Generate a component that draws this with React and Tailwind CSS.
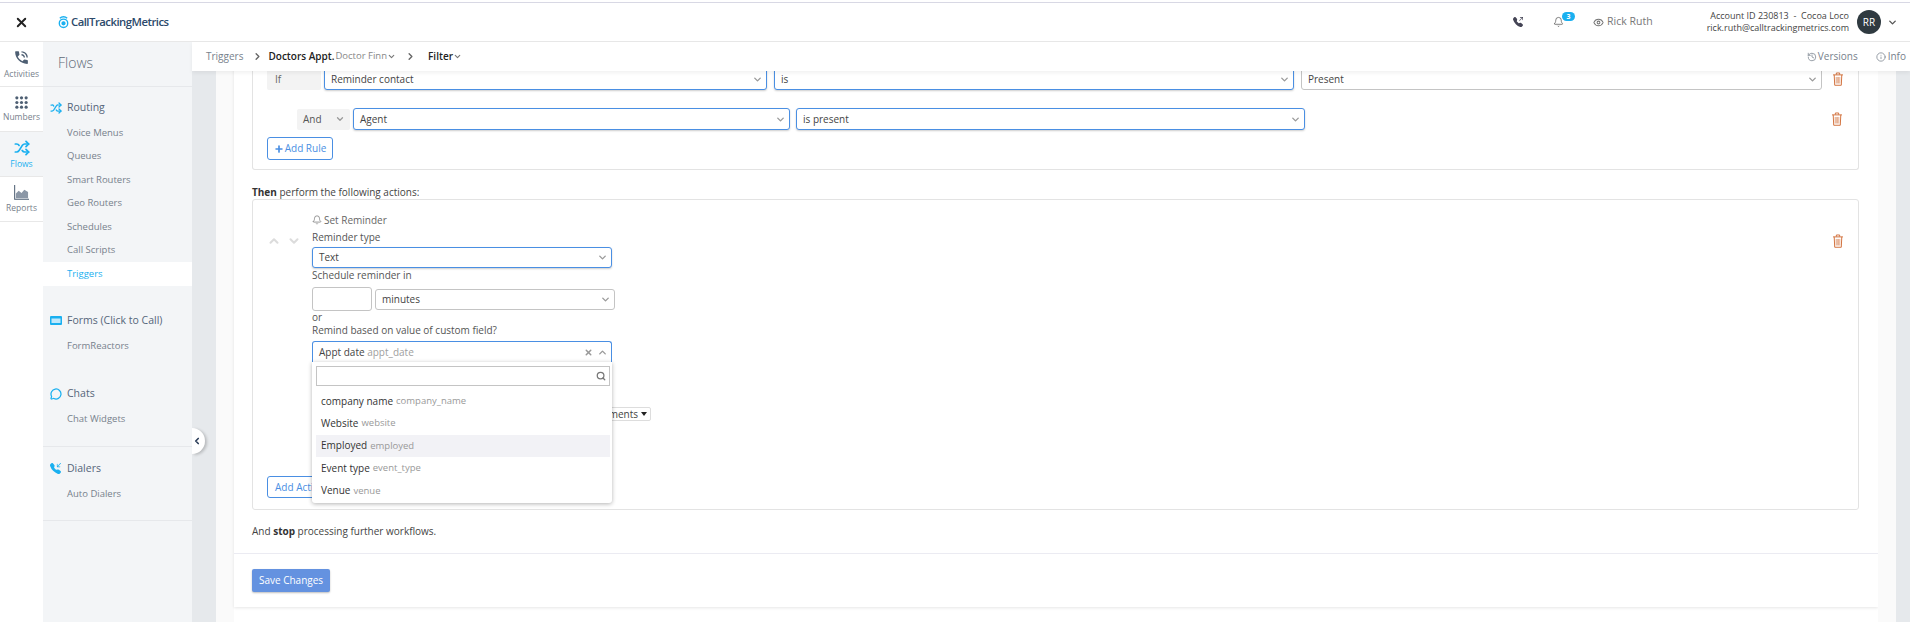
import React from 'react'
import { ChevronDown, ChevronUp, ChevronRight, ChevronLeft, Shuffle, Bell, Eye, History, Info, Plus, Search, X, MessageCircle } from 'lucide-react'
import { MdPhoneInTalk } from 'react-icons/md'
import { BsTelephoneOutboundFill, BsTelephoneInboundFill } from 'react-icons/bs'

const TrashIcon = ({ className }) => (
  <svg viewBox="0 0 14 17" className={className} fill="none" stroke="#d2723e" strokeWidth="1.2">
    <path d="M1 3.5h12M5 3.2V1.2h4v2M2.4 3.5l.6 12.6h8l.6-12.6" />
    <path d="M4.8 6v8M6.2 6v8M7.7 6v8M9.2 6v8" strokeWidth="1" opacity="0.7" />
  </svg>
)

const GridIcon = () => (
  <svg viewBox="0 0 14 14" className="w-[13px] h-[13px]" fill="#4e5f73">
    {[2, 7, 12].map((y) => [2, 7, 12].map((x) => <circle key={x + '-' + y} cx={x} cy={y} r="1.7" />))}
  </svg>
)

const ChartIcon = () => (
  <svg viewBox="0 0 16 16" className="w-[15px] h-[15px]">
    <path d="M.7 0v15.3H16" fill="none" stroke="#4e5f73" strokeWidth="1.1" />
    <path d="M2 13V9l3-3 3 2.5L11 5l4 2.5V14H2z" fill="#8b97a6" />
  </svg>
)

const FormIcon = () => (
  <svg viewBox="0 0 12 9" className="w-[12px] h-[9px]">
    <rect width="12" height="9" rx="1" fill="#1ab0f0" />
    <rect x="1.5" y="2.5" width="9" height="4.5" fill="#bfe8fb" />
  </svg>
)

const Select = ({ value, focus, w, h = 'h-[22px]' }) => (
  <div className={`${w} ${h} flex items-center justify-between pl-[6px] pr-[3px] rounded-[3px] bg-white border text-[10px] text-[#444] ${focus ? 'border-[#4a8fe3] shadow-[0_1px_2px_rgba(0,0,0,0.2)]' : 'border-[#c4c4c4]'}`}>
    <span>{value}</span>
    <ChevronDown className="w-[11px] h-[11px] text-[#9a9a9a]" strokeWidth={3} />
  </div>
)

const subGroups = [
  { title: 'Routing', icon: <Shuffle className="w-[12px] h-[12px] text-[#1ab0f0]" strokeWidth={2.5} />, items: ['Voice Menus', 'Queues', 'Smart Routers', 'Geo Routers', 'Schedules', 'Call Scripts', 'Triggers'], box: 'h-[199px] mb-[14px]' },
  { title: 'Forms (Click to Call)', icon: <FormIcon />, items: ['FormReactors'], box: 'h-[72px] mb-[1px]' },
  { title: 'Chats', icon: <MessageCircle className="w-[12px] h-[12px] text-[#1ab0f0]" strokeWidth={2.5} />, items: ['Chat Widgets'], box: 'h-[65px] mb-[10px] border-b border-[#e6e8eb]' },
  { title: 'Dialers', icon: <BsTelephoneInboundFill className="w-[11px] h-[11px] text-[#1ab0f0]" />, items: ['Auto Dialers'], box: 'h-[64px] border-b border-[#e6e8eb]' },
]

const rail = [
  { label: 'Activities', icon: <MdPhoneInTalk className="w-[17px] h-[17px] text-[#4e5f73]" /> },
  { label: 'Numbers', icon: <GridIcon /> },
  { label: 'Flows', icon: <Shuffle className="w-[16px] h-[16px] text-[#1ab0f0]" strokeWidth={2.6} />, active: true },
  { label: 'Reports', icon: <ChartIcon /> },
]

const options = [
  ['company name', 'company_name'],
  ['Website', 'website'],
  ['Employed', 'employed'],
  ['Event type', 'event_type'],
  ['Venue', 'venue'],
]

export default function App() {
  return (
    <div className="w-[1910px] h-[622px] overflow-hidden flex flex-col bg-white font-['Open_Sans',sans-serif]">
      {/* top bar */}
      <div className="h-[2px] shrink-0" />
      <div className="h-[40px] shrink-0 flex items-center border-t border-t-[#d8d8e4] border-b border-b-[#e8e8e8] pr-[12px] text-[#555]">
        <div className="w-[43px] flex justify-center"><X className="w-[15px] h-[15px] text-[#222]" strokeWidth={3} /></div>
        <div className="ml-[15px] flex items-center gap-[2px]">
          <svg viewBox="0 0 12 14" className="w-[11px] h-[14px]" fill="none" stroke="#1ab0f0" strokeWidth="1.5">
            <circle cx="6" cy="8.4" r="4.6" />
            <circle cx="6" cy="8.4" r="1.6" fill="#1ab0f0" />
            <path d="M2 3a5.5 5.5 0 0 1 8 0" />
          </svg>
          <span className="text-[11.3px] font-semibold tracking-[-0.5px] text-[#2c4a6b]">CallTrackingMetrics</span>
        </div>
        <div className="ml-auto flex items-center">
          <BsTelephoneOutboundFill className="w-[10px] h-[10px] text-[#445]" />
          <div className="relative ml-[30px]">
            <Bell className="w-[11px] h-[12px] text-[#555]" strokeWidth={1.6} />
            <span className="absolute -top-[4px] left-[9px] w-[13px] h-[9px] rounded-full bg-[#1ab0f0] text-white text-[7px] leading-[9px] text-center font-bold">3</span>
          </div>
          <Eye className="ml-[29px] w-[11px] h-[11px] text-[#777]" strokeWidth={2.2} />
          <span className="ml-[3px] text-[10.5px] text-[#777]">Rick Ruth</span>
          <div className="ml-[54px] text-right text-[9px] leading-[12px] text-[#444]">
            <div className="whitespace-pre">Account ID 230813  -  Cocoa Loco</div>
            <div>rick.ruth@calltrackingmetrics.com</div>
          </div>
          <div className="ml-[8px] w-[24px] h-[24px] rounded-full bg-[#2f3a40] text-white text-[10px] flex items-center justify-center">RR</div>
          <ChevronDown className="ml-[6px] w-[11px] h-[11px] text-[#555]" strokeWidth={3} />
        </div>
      </div>

      <div className="flex-1 flex min-h-0">
        {/* icon rail */}
        <div className="w-[43px] shrink-0">
          {rail.map((r) => (
            <div key={r.label} className={`h-[45px] flex flex-col items-center justify-center gap-[3px] border-b border-[#e8e8e8] ${r.active ? 'bg-[#f3f5f7]' : 'bg-white'}`}>
              {r.icon}
              <span className={`text-[8.5px] leading-[10px] ${r.active ? 'text-[#1ab0f0]' : 'text-[#77818c]'}`}>{r.label}</span>
            </div>
          ))}
        </div>

        {/* section nav */}
        <div className="relative w-[149px] shrink-0 bg-[#f3f5f7]">
          <div className="h-[45px] pl-[15px] pt-[10px] border-b border-[#e6e8eb] text-[14px] font-light leading-[22px] text-[#5f6b78]">Flows</div>
          <div className="pt-[9px]">
            {subGroups.map((g) => (
              <div key={g.title} className={g.box}>
                <div className="h-[23px] flex items-center pl-[7px]">
                  <span className="w-[17px] flex items-center">{g.icon}</span>
                  <span className="text-[10.5px] text-[#55657a]">{g.title}</span>
                </div>
                <div className="mt-[2px]">
                  {g.items.map((it) => (
                    <div key={it} className={`h-[23.5px] flex items-center pl-[24px] text-[9.5px] ${it === 'Triggers' ? 'bg-white text-[#1ab0f0]' : 'text-[#77818c]'}`}>{it}</div>
                  ))}
                </div>
              </div>
            ))}
          </div>
          <div className="absolute left-full top-[386px] w-[13px] h-[26px] rounded-r-full bg-white shadow-[2px_1px_3px_rgba(0,0,0,0.2)] flex items-center">
            <ChevronLeft className="w-[10px] h-[10px] text-[#2c3e5a]" strokeWidth={4} />
          </div>
        </div>

        {/* content */}
        <div className="flex-1 min-w-0 flex flex-col">
          <div className="relative z-10 h-[29px] shrink-0 bg-white shadow-[0_2px_4px_rgba(0,0,0,0.06)] flex items-center pl-[14px] pr-[4px] text-[10px]">
            <span className="text-[#77818c]">Triggers</span>
            <ChevronRight className="ml-[9px] w-[11px] h-[11px] text-[#666]" strokeWidth={3} />
            <span className="ml-[5px] font-semibold text-[#222]">Doctors Appt.</span>
            <span className="ml-[1px] text-[9.5px] text-[#888]">Doctor Finn</span>
            <ChevronDown className="w-[9px] h-[9px] text-[#777]" strokeWidth={3} />
            <ChevronRight className="ml-[9px] w-[11px] h-[11px] text-[#666]" strokeWidth={3} />
            <span className="ml-[12px] font-semibold text-[#222]">Filter</span>
            <ChevronDown className="w-[9px] h-[9px] text-[#777]" strokeWidth={3} />
            <div className="ml-auto flex items-center text-[10px] text-[#77818c]">
              <History className="w-[10px] h-[10px]" strokeWidth={1.8} />
              <span className="ml-[1px]">Versions</span>
              <Info className="ml-[18px] w-[10px] h-[10px]" strokeWidth={1.8} />
              <span className="ml-[2px]">Info</span>
            </div>
          </div>

          <div className="flex-1 min-h-0 flex overflow-hidden">
            <div className="w-[24px] shrink-0 bg-[#e6e9ec]" />
            <div className="w-[18px] shrink-0 bg-[#fafafa]" />
            <div className="flex-1 min-w-0">
              <div className="bg-white shadow-[0_1px_3px_rgba(0,0,0,0.1)] -mt-[6px] h-[542px] pl-[18px] text-[10px] text-[#555]">
                {/* conditions */}
                <div className="w-[1607px] h-[105px] border border-t-0 border-[#e3e3e3] rounded-b-[3px] pl-[14px] pt-[3px]">
                  <div className="flex items-center">
                    <div className="w-[54px] h-[22px] rounded-[2px] bg-[#f3f3f3] pl-[8px] flex items-center text-[#666]">If</div>
                    <div className="ml-[3px]"><Select focus value="Reminder contact" w="w-[443px]" /></div>
                    <div className="ml-[7px]"><Select focus value="is" w="w-[520px]" /></div>
                    <div className="ml-[7px]"><Select value="Present" w="w-[521px]" /></div>
                    <TrashIcon className="ml-[10px] w-[12px] h-[14px]" />
                  </div>
                  <div className="flex items-center mt-[18px] pl-[30px]">
                    <div className="w-[53px] h-[21px] rounded-[2px] bg-[#f3f3f3] pl-[6px] pr-[5px] flex items-center justify-between text-[#555]">
                      And
                      <ChevronDown className="w-[10px] h-[10px] text-[#999]" strokeWidth={3} />
                    </div>
                    <div className="ml-[3px]"><Select focus value="Agent" w="w-[437px]" /></div>
                    <div className="ml-[6px]"><Select focus value="is present" w="w-[509px]" /></div>
                    <TrashIcon className="ml-[526px] w-[12px] h-[14px]" />
                  </div>
                  <div className="mt-[7px] w-[66px] h-[23px] rounded-[3px] border border-[#4a8fe3] flex items-center justify-center gap-[1px] text-[#4a8fe3]">
                    <Plus className="w-[10px] h-[10px]" strokeWidth={4} />
                    Add Rule
                  </div>
                </div>

                <div className="mt-[15px] h-[14px] leading-[14px] text-[#444]"><b className="font-bold text-[#333]">Then</b> perform the following actions:</div>

                {/* actions */}
                <div className="w-[1607px] h-[311px] border border-[#e3e3e3] rounded-[3px] flex">
                  <div className="relative w-[59px] shrink-0 pl-[14px] pt-[34px] flex items-start gap-[6px]">
                    <ChevronUp className="w-[14px] h-[14px] text-[#dcdcdc]" strokeWidth={3.5} />
                    <ChevronDown className="w-[14px] h-[14px] text-[#dcdcdc]" strokeWidth={3.5} />
                    <div className="absolute left-[14px] top-[276px] w-[66px] h-[22px] rounded-[3px] border border-[#4a8fe3] pl-[7px] flex items-center text-[#4a8fe3] whitespace-nowrap">Add Action</div>
                  </div>
                  <div className="relative flex-1 pt-[13px]">
                    <div className="h-[14px] flex items-center gap-[2px] text-[#666]">
                      <Bell className="w-[10px] h-[10px]" strokeWidth={1.6} />
                      Set Reminder
                    </div>
                    <div className="mt-[3px] h-[14px] leading-[14px]">Reminder type</div>
                    <div className="mt-[3px]"><Select focus value="Text" w="w-[300px]" h="h-[21px]" /></div>
                    <div className="h-[14px] leading-[14px]">Schedule reminder in</div>
                    <div className="mt-[5px] flex items-center gap-[3px]">
                      <div className="w-[60px] h-[24px] rounded-[3px] border border-[#c4c4c4]" />
                      <Select value="minutes" w="w-[240px]" h="h-[21px]" />
                    </div>
                    <div className="h-[13px] leading-[13px]">or</div>
                    <div className="h-[13px] leading-[13px]">Remind based on value of custom field?</div>
                    <div className="relative mt-[4px] w-[300px]">
                      <div className="h-[21px] flex items-center justify-between pl-[6px] pr-[3px] rounded-t-[3px] border border-b-0 border-[#4a8fe3] bg-white text-[#444]">
                        <span>Appt date <span className="text-[#a0a0a0]">appt_date</span></span>
                        <span className="flex items-center gap-[4px]">
                          <X className="w-[9px] h-[9px] text-[#999]" strokeWidth={4} />
                          <ChevronUp className="w-[11px] h-[11px] text-[#999]" strokeWidth={3} />
                        </span>
                      </div>
                      <div className="absolute z-20 left-0 top-[21px] w-full h-[141px] bg-white rounded-b-[3px] shadow-[0_1px_4px_rgba(0,0,0,0.3)] pl-[4px] pr-[3px] pt-[4px]">
                        <div className="h-[20px] mr-[-1px] border border-[#c4c4c4] flex items-center justify-end pr-[3px]">
                          <Search className="w-[10px] h-[10px] text-[#777]" strokeWidth={3} />
                        </div>
                        <div className="mt-[4px]">
                          {options.map(([a, b]) => (
                            <div key={b} className={`h-[22.4px] mr-[-1px] pl-[5px] flex items-center gap-[3px] text-[#333] ${a === 'Employed' ? 'bg-[#f2f2f6]' : ''}`}>
                              {a}<span className="text-[9.5px] text-[#999]">{b}</span>
                            </div>
                          ))}
                        </div>
                      </div>
                      <div className="absolute left-[290px] top-[66px] w-[49px] h-[14px] rounded-[2px] border border-[#ddd] flex items-center justify-end gap-[3px] pr-[3px] text-[#444]">
                        ments
                        <span className="border-x-[3px] border-x-transparent border-t-[4px] border-t-[#222]" />
                      </div>
                    </div>
                    <TrashIcon className="absolute right-[14px] top-[34px] w-[12px] h-[14px]" />
                  </div>
                </div>

                <div className="mt-[14px] h-[14px] leading-[14px] text-[#444]">And <b className="font-bold text-[#333]">stop</b> processing further workflows.</div>
                <div className="-ml-[18px] mt-[15px] border-t border-[#ebebf2]" />
                <div className="mt-[15px] w-[78px] h-[23px] rounded-[2px] bg-[#6492e0] shadow-[0_1px_2px_rgba(0,0,0,0.25)] text-white flex items-center justify-center">Save Changes</div>
              </div>
            </div>
            <div className="w-[18px] shrink-0 bg-[#fafafa]" />
            <div className="w-[14px] shrink-0 bg-[#e6e9ec]" />
          </div>
        </div>
      </div>
    </div>
  )
}
